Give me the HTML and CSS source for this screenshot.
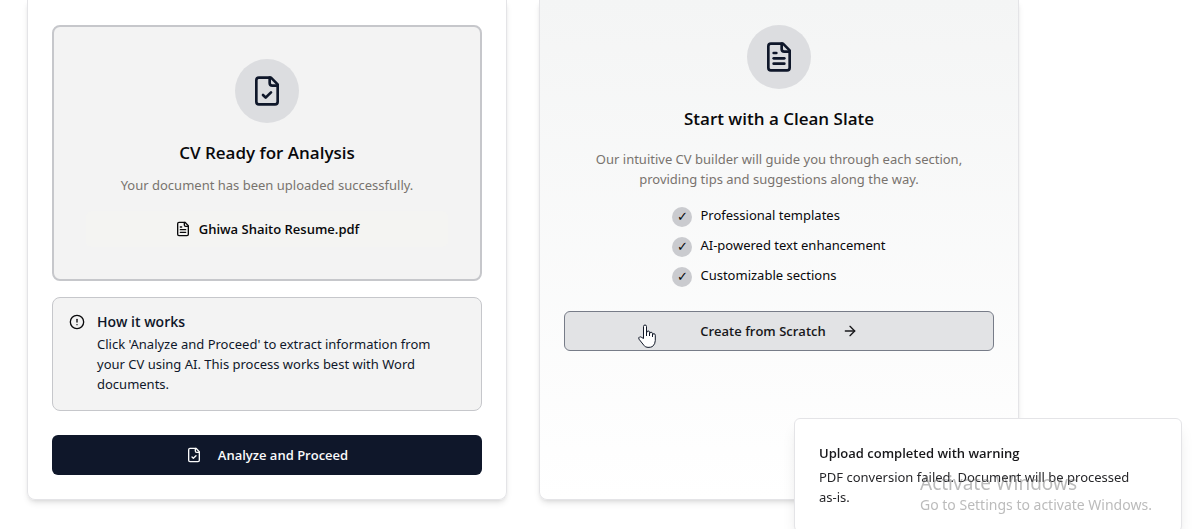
FILE: index.html
```html
<!DOCTYPE html>
<html lang="en">
<head>
<meta charset="utf-8">
<meta name="viewport" content="width=device-width, initial-scale=1">
<title>Create your CV</title>
<link rel="stylesheet" href="styles.css">
</head>
<body>
<main class="options">
  <section class="card">
    <div class="upload">
      <div class="badge">
        <svg class="icon icon-lg" viewBox="0 0 24 24" aria-hidden="true"><path d="M15 2H6a2 2 0 0 0-2 2v16a2 2 0 0 0 2 2h12a2 2 0 0 0 2-2V7Z"/><path d="M14 2v4a2 2 0 0 0 2 2h4"/><path d="m9 15 2 2 4-4"/></svg>
      </div>
      <h2 class="heading">CV Ready for Analysis</h2>
      <p class="muted upload-note">Your document has been uploaded successfully.</p>
      <div class="file">
        <svg class="icon" viewBox="0 0 24 24" aria-hidden="true"><path d="M15 2H6a2 2 0 0 0-2 2v16a2 2 0 0 0 2 2h12a2 2 0 0 0 2-2V7Z"/><path d="M14 2v4a2 2 0 0 0 2 2h4"/><path d="M10 9H8"/><path d="M16 13H8"/><path d="M16 17H8"/></svg>
        <span>Ghiwa Shaito Resume.pdf</span>
      </div>
    </div>
    <div class="notice">
      <svg class="icon notice-icon" viewBox="0 0 24 24" aria-hidden="true"><circle cx="12" cy="12" r="10"/><path d="M12 8v4"/><path d="M12 16h.01"/></svg>
      <div class="notice-body">
        <h3 class="notice-title">How it works</h3>
        <p>Click 'Analyze and Proceed' to extract information from your CV using AI. This process works best with Word documents.</p>
      </div>
    </div>
    <button class="button button-primary" type="button">
      <svg class="icon" viewBox="0 0 24 24" aria-hidden="true"><path d="M15 2H6a2 2 0 0 0-2 2v16a2 2 0 0 0 2 2h12a2 2 0 0 0 2-2V7Z"/><path d="M14 2v4a2 2 0 0 0 2 2h4"/><path d="m9 15 2 2 4-4"/></svg>
      Analyze and Proceed
    </button>
  </section>

  <section class="card card-scratch">
    <div class="badge">
      <svg class="icon icon-lg" viewBox="0 0 24 24" aria-hidden="true"><path d="M15 2H6a2 2 0 0 0-2 2v16a2 2 0 0 0 2 2h12a2 2 0 0 0 2-2V7Z"/><path d="M14 2v4a2 2 0 0 0 2 2h4"/><path d="M10 9H8"/><path d="M16 13H8"/><path d="M16 17H8"/></svg>
    </div>
    <h2 class="heading">Start with a Clean Slate</h2>
    <p class="muted intro">Our intuitive CV builder will guide you through each section, providing tips and suggestions along the way.</p>
    <ul class="features">
      <li class="feature"><span class="tick">✓</span>Professional templates</li>
      <li class="feature"><span class="tick">✓</span>AI-powered text enhancement</li>
      <li class="feature"><span class="tick">✓</span>Customizable sections</li>
    </ul>
    <button class="button button-outline" type="button">
      Create from Scratch
      <svg class="icon" viewBox="0 0 24 24" aria-hidden="true"><path d="M5 12h14"/><path d="m12 5 7 7-7 7"/></svg>
      <svg class="pointer" viewBox="0 0 18 24" aria-hidden="true"><path d="M5.5 14.5V2.5Q5.5 1 7 1T8.500 2.500V9Q8.700 7 10.200 7T11.500 8.500V10Q11.700 8 13.100 8.200T14.500 9.700V11Q14.700 9.500 16 9.700T17.300 11.200V16.500Q17.300 20 14.500 22.500Q13 23.400 10 23.400T5.800 21.200L1 15.200Q.200 13.500 1.500 13T3.800 13.500Z"/><path d="M8.500 9v3M11.500 10v2M14.500 11v2"/></svg>
    </button>
  </section>
</main>

<aside class="toast" role="status">
  <strong class="toast-title">Upload completed with warning</strong>
  <p>PDF conversion failed. Document will be processed <span class="keep">as-is.</span></p>
</aside>

<div class="watermark">
  <p class="watermark-title">Activate Windows</p>
  <p class="watermark-text">Go to Settings to activate Windows.</p>
</div>
</body>
</html>
```
FILE: styles.css
```css
* {
  box-sizing: border-box;
}

body,
h2,
h3,
p,
ul {
  margin: 0;
  padding: 0;
}

body {
  background: #fff;
  color: #09090b;
  font: 13px/20px "Segoe UI", "Noto Sans", "Open Sans", sans-serif;
  overflow: hidden;
}

.options {
  display: grid;
  grid-template-columns: 1fr 1fr;
  gap: 32px;
  padding: 0 175px 29px 27px;
}

.card {
  display: flex;
  flex-direction: column;
  padding: 25px 24px 24px;
  border: 1px solid #e4e4e7;
  border-top: 0;
  border-radius: 0 0 8px 8px;
  box-shadow: 0 4px 6px -1px rgba(0, 0, 0, 0.1), 0 2px 4px -2px rgba(0, 0, 0, 0.1);
}

.card-scratch {
  align-items: center;
  background: linear-gradient(#f4f5f5, #fff);
}

.upload {
  display: flex;
  flex-direction: column;
  align-items: center;
  padding: 32px;
  border: 2px solid #c6c7cb;
  border-radius: 8px;
  background: #f3f3f3;
}

.badge {
  display: grid;
  place-items: center;
  width: 64px;
  height: 64px;
  margin-bottom: 16px;
  border-radius: 50%;
  background: #dcdde0;
  color: #0f172a;
}

.icon {
  flex: none;
  width: 16px;
  height: 16px;
  fill: none;
  stroke: currentColor;
  stroke-width: 2;
  stroke-linecap: round;
  stroke-linejoin: round;
}

.icon-lg {
  width: 32px;
  height: 32px;
}

.heading,
.file,
.notice-title,
.button,
.toast-title {
  font-family: "Segoe UI", "Open Sans", sans-serif;
  font-weight: 600;
}

.heading {
  font-size: 17px;
  line-height: 28px;
}

.muted {
  color: #78736e;
  text-align: center;
}

.upload-note {
  margin-top: 8px;
}

.file {
  display: flex;
  align-items: center;
  justify-content: center;
  gap: 8px;
  width: 100%;
  margin-top: 16px;
  padding: 8px;
  border-radius: 6px;
  background: #f4f4f2;
}

.notice {
  display: flex;
  gap: 12px;
  margin-top: 16px;
  padding: 16px;
  border: 1px solid #c6c7cb;
  border-radius: 8px;
  background: #f3f3f3;
  color: #0f172a;
}

.notice-icon {
  color: #09090b;
}

.notice-body {
  padding-right: 16px;
}

.notice-title {
  margin-bottom: 4px;
  font-size: 14px;
  line-height: 16px;
}

.button {
  display: flex;
  align-items: center;
  justify-content: center;
  gap: 16px;
  width: 100%;
  height: 40px;
  margin-top: 24px;
  border: 0;
  border-radius: 6px;
  font-size: 13px;
  line-height: 20px;
}

.button-primary {
  background: #0f172a;
  color: #fafafa;
}

.button-outline {
  position: relative;
  border: 1px solid #777c88;
  background: #e2e3e5;
  color: #18181b;
  cursor: pointer;
}

.pointer {
  position: absolute;
  top: 12px;
  left: 17%;
  width: 18px;
  height: 24px;
  fill: #fff;
  stroke: #111827;
}

.intro {
  margin-top: 16px;
  padding: 0 8px;
}

.features {
  display: grid;
  gap: 8px;
  margin-top: 16px;
  list-style: none;
}

.feature {
  display: flex;
  gap: 8px;
}

.tick {
  display: grid;
  place-items: center;
  width: 20px;
  height: 20px;
  margin-top: 2px;
  border-radius: 50%;
  background: #cacbcf;
  font-family: "DejaVu Sans", sans-serif;
}

.toast {
  position: fixed;
  right: 12px;
  bottom: -3px;
  width: 388px;
  padding: 24px;
  border: 1px solid #e4e4e7;
  border-radius: 6px;
  background: #fff;
  box-shadow: 0 10px 15px -3px rgba(0, 0, 0, 0.1), 0 4px 6px -4px rgba(0, 0, 0, 0.1);
  color: #27272a;
}

.toast-title {
  display: block;
  margin-bottom: 4px;
  color: #18181b;
}

.keep {
  white-space: nowrap;
}

.watermark {
  position: fixed;
  right: 38px;
  bottom: 14px;
  width: 236px;
  color: rgba(120, 120, 120, 0.5);
  white-space: nowrap;
  pointer-events: none;
}

.watermark-title {
  font-size: 19px;
  line-height: 24px;
}

.watermark-text {
  font-size: 14px;
}
```
